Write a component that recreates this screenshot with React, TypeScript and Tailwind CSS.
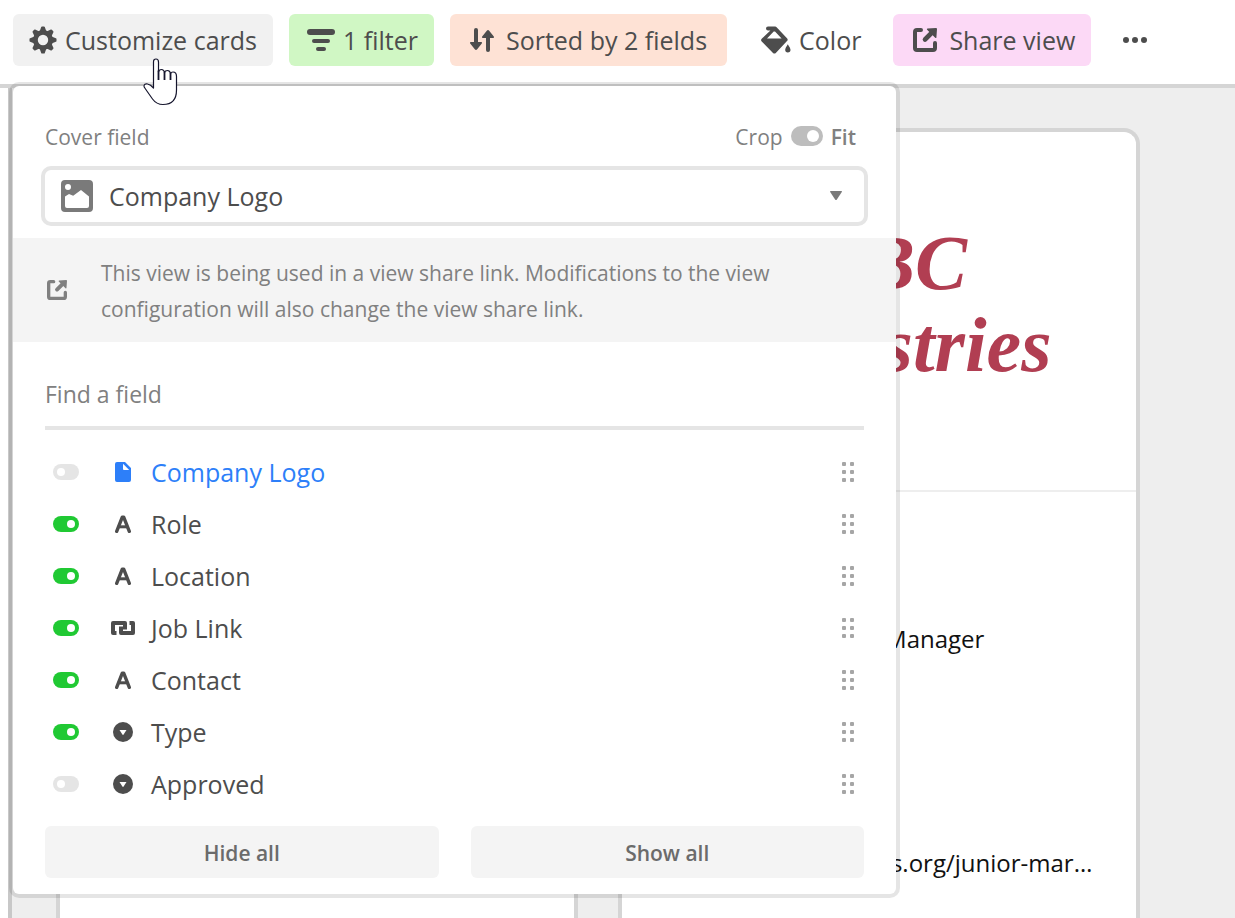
import type { ReactNode } from "react";

type FieldKind = "file" | "text" | "link" | "select";

type Field = {
  name: string;
  kind: FieldKind;
  visible: boolean;
};

const fields: Field[] = [
  { name: "Company Logo", kind: "file", visible: false },
  { name: "Role", kind: "text", visible: true },
  { name: "Location", kind: "text", visible: true },
  { name: "Job Link", kind: "link", visible: true },
  { name: "Contact", kind: "text", visible: true },
  { name: "Type", kind: "select", visible: true },
  { name: "Approved", kind: "select", visible: false },
];

const teeth = [0, 45, 90, 135, 180, 225, 270, 315];

function GearIcon() {
  return (
    <svg width="28" height="28" viewBox="0 0 28 28" fill="none" aria-hidden="true">
      <circle cx="14" cy="14" r="7.6" stroke="currentColor" strokeWidth="4.8" />
      {teeth.map((a) => (
        <path
          key={a}
          d="M10.6 5.5 L12.2 1.1 Q12.4 0.5 13 0.5 H15 Q15.6 0.5 15.8 1.1 L17.4 5.5 Z"
          fill="currentColor"
          transform={`rotate(${a} 14 14)`}
        />
      ))}
    </svg>
  );
}

function FilterIcon() {
  return (
    <svg width="28" height="28" viewBox="0 0 28 28" fill="currentColor" aria-hidden="true">
      <rect x="0" y="3" width="28" height="6" rx="3" />
      <rect x="5" y="13" width="18" height="4" rx="2" />
      <rect x="9" y="21" width="10" height="4" rx="2" />
    </svg>
  );
}

function SortIcon() {
  return (
    <svg width="24" height="24" viewBox="0 0 24 24" fill="currentColor" aria-hidden="true">
      <path d="M4 2a2 2 0 0 1 4 0v12h3.2c.9 0 1.100 .8.6 1.400L7.200 21.300c-.7.8-1.700.8-2.400 0L.2 15.400c-.5-.6-.2-1.400.6-1.400H4z" />
      <path d="M16 22a2 2 0 0 0 4 0V10h3.200c.9 0 1.100-.8.6-1.400L19.200 2.700c-.7-.8-1.700-.8-2.400 0L12.200 8.600c-.5.6-.2 1.400.6 1.400H16z" />
    </svg>
  );
}

function PaintIcon() {
  return (
    <svg width="30" height="28" viewBox="0 0 30 28" aria-hidden="true">
      <path
        fill="currentColor"
        fillRule="evenodd"
        d="M7 0.600h7.200q.8 0 1.400.6L26 12.300q1.400 1.400 0 2.800L14.800 26.900q-1.400 1.400-2.800 0L.7 15.500q-1.300-1.400 0-2.800L9.400 4.500H7A2 2 0 0 1 5 2.600 2 2 0 0 1 7 .6zM12.700 5.500 6 12.400h14.600L14 5.500z"
      />
      <path fill="currentColor" d="M26.800 18.200c1.400 2.400 2.700 4 2.700 5.600a2.600 2.600 0 0 1-5.300 0c0-1.600 1.200-3.200 2.600-5.600z" />
    </svg>
  );
}

function ShareIcon({ size }: { size: number }) {
  return (
    <svg width={size} height={size} viewBox="0 0 24 24" fill="none" aria-hidden="true">
      <path
        d="M8 2H4a2 2 0 0 0-2 2v16a2 2 0 0 0 2 2h16a2 2 0 0 0 2-2v-5"
        stroke="currentColor"
        strokeWidth="4"
        strokeLinecap="round"
      />
      <path d="M12 11.500 18 5.500" stroke="currentColor" strokeWidth="4.600" strokeLinecap="round" />
      <path d="M14.500 0.600 23 0q1 0 1 1l-.6 8.400q-.2 1.200-1.200.4l-8.100-8q-.7-.9.400-1.200z" fill="currentColor" />
    </svg>
  );
}

function ImageIcon() {
  return (
    <svg width="32" height="32" viewBox="0 0 32 32" aria-hidden="true">
      <path
        fill="currentColor"
        fillRule="evenodd"
        d="M4 0h24a4 4 0 0 1 4 4v24a4 4 0 0 1-4 4H4a4 4 0 0 1-4-4V4a4 4 0 0 1 4-4zM7 4a3 3 0 1 0 0 6 3 3 0 0 0 0-6zM4 16.400V26a2 2 0 0 0 2 2h20a2 2 0 0 0 2-2V16.400L20 10l-7.800 5.800L8 14z"
      />
    </svg>
  );
}

function KindIcon({ kind }: { kind: FieldKind }) {
  if (kind === "file") {
    return (
      <svg width="16" height="20" viewBox="0 0 16 20" aria-hidden="true">
        <path
          fill="currentColor"
          fillRule="evenodd"
          d="M2 0h8l6 6v12a2 2 0 0 1-2 2H2a2 2 0 0 1-2-2V2a2 2 0 0 1 2-2zM8 1.800V7a1 1 0 0 0 1 1h5.200z"
        />
      </svg>
    );
  }
  if (kind === "text") {
    return (
      <svg width="16" height="18" viewBox="0 0 16 18" fill="none" stroke="currentColor" aria-hidden="true">
        <path d="M1.700 16.300 7.300 2.200H8.700L14.300 16.300" strokeWidth="3.400" strokeLinecap="round" strokeLinejoin="round" />
        <path d="M4 11.800h8" strokeWidth="3" />
      </svg>
    );
  }
  if (kind === "link") {
    return (
      <svg width="24" height="14" viewBox="0 0 24 14" fill="none" stroke="currentColor" strokeLinejoin="round" aria-hidden="true">
        <path d="M5.500 12H2V2H14V8.500" strokeWidth="4" />
        <path d="M18.500 2H22V12H10V5.500" strokeWidth="4" />
      </svg>
    );
  }
  return (
    <svg width="20" height="20" viewBox="0 0 20 20" aria-hidden="true">
      <circle cx="10" cy="10" r="10" fill="currentColor" />
      <path d="M6.500 8h7L10.600 12.600q-.6.800-1.200 0z" fill="#fff" />
    </svg>
  );
}

function DragHandle() {
  return (
    <svg width="12" height="20" viewBox="0 0 12 20" fill="currentColor" aria-hidden="true">
      {[0, 8, 16].map((y) => (
        <g key={y}>
          <rect x="0" y={y} width="4" height="4" rx="1" />
          <rect x="8" y={y} width="4" height="4" rx="1" />
        </g>
      ))}
    </svg>
  );
}

function HandCursor() {
  return (
    <svg
      className="pointer-events-none absolute left-[142px] top-[58px] z-20"
      width="37"
      height="48"
      viewBox="0 0 37 48"
      aria-hidden="true"
    >
      <path
        d="M11.500 30V4q0-3 2.500-3t2.500 3v10q.5-2.500 3-2.500t3 3q.6-2 3-2t3 3q.5-1.500 2.500-1.500 3.500 0 3.500 4.500V32q0 14.500-13.500 14.500-6.500 0-10.500-5.500L3.500 31Q1.500 28.500 2 27.500q.8-2 3.500-1.500 3 .6 6 4z"
        fill="#fff"
        stroke="#15152d"
        strokeWidth="1.200"
        strokeLinejoin="round"
      />
      <path d="M16.500 12.500V22M22.500 14V22M28.500 15V22" stroke="#15152d" strokeWidth="1.800" fill="none" />
    </svg>
  );
}

function ToolButton({ className, icon, children }: { className: string; icon: ReactNode; children: string }) {
  return (
    <button
      type="button"
      className={`flex h-[52px] shrink-0 items-center whitespace-nowrap rounded-md text-[25px] font-medium ${className}`}
    >
      {icon}
      <span className="pt-0.5">{children}</span>
    </button>
  );
}

function Toolbar() {
  return (
    <header className="flex h-22 items-start gap-4 border-b-4 border-[#d5d5d5] bg-white pl-[13px] pt-3.5 text-[#4d4d4d]">
      <ToolButton className="gap-2 bg-[#f1f1f1] px-4" icon={<GearIcon />}>
        Customize cards
      </ToolButton>
      <ToolButton className="gap-2 bg-[#d0f7c4] pl-[18px] pr-4" icon={<FilterIcon />}>
        1 filter
      </ToolButton>
      <ToolButton className="gap-3 bg-[#fee2d5] px-5" icon={<SortIcon />}>
        Sorted by 2 fields
      </ToolButton>
      <ToolButton className="gap-2 pl-[18px] pr-4" icon={<PaintIcon />}>
        Color
      </ToolButton>
      <ToolButton className="gap-3 bg-[#fcd9f6] pl-5 pr-4" icon={<ShareIcon size={24} />}>
        Share view
      </ToolButton>
      <button type="button" aria-label="More options" className="flex h-[52px] items-center px-4">
        <svg width="24" height="6" viewBox="0 0 24 6" fill="currentColor" aria-hidden="true">
          <circle cx="3" cy="3" r="3" />
          <circle cx="12" cy="3" r="3" />
          <circle cx="21" cy="3" r="3" />
        </svg>
      </button>
    </header>
  );
}

function Board() {
  return (
    <main className="ml-2 grid grow grid-cols-2 gap-10 border-l-4 border-[#c8c8c8] bg-[#eeeeee] pl-11 pr-[95px] pt-10">
      <article className="rounded-t-2xl border-4 border-b-0 border-[#d5d5d5] bg-white" />
      <article className="rounded-t-2xl border-4 border-b-0 border-[#d5d5d5] bg-white">
        <div className="flex h-90 flex-col items-center border-b-2 border-[#eeeeee] pl-5 pt-[90px] font-['Liberation_Serif',serif] text-[78px] font-bold italic leading-[82px] text-[#b13e52]">
          <span>ABC</span>
          <span>Industries</span>
        </div>
        <div className="whitespace-nowrap px-8 pt-[127px] text-2xl text-[#111111]">
          <p className="leading-10">Associate Marketing Manager</p>
          <p className="pt-46 leading-10">
            <a href="#job">http://goabcindustries.org/junior-mar…</a>
          </p>
        </div>
      </article>
    </main>
  );
}

function FieldRow({ field }: { field: Field }) {
  return (
    <li className="flex h-[52px] items-center pl-2 pr-2.5">
      <label className="flex grow items-center">
        <input
          type="checkbox"
          defaultChecked={field.visible}
          className="flex h-4 w-[26px] shrink-0 appearance-none rounded-full bg-[#e5e5e5] p-1 before:size-2 before:rounded-full before:bg-white before:content-[''] checked:bg-[#20c933] checked:before:ml-2.5"
        />
        <span className={`flex items-center ${field.kind === "file" ? "text-[#2d7ff9]" : "text-[#4d4d4d]"}`}>
          <span className="ml-7 flex w-8 justify-center">
            <KindIcon kind={field.kind} />
          </span>
          <span className="ml-3 pt-0.5 text-[25px]">{field.name}</span>
        </span>
      </label>
      <button type="button" aria-label={`Reorder ${field.name}`} className="text-[#a6a6a6]">
        <DragHandle />
      </button>
    </li>
  );
}

function CustomizePanel() {
  return (
    <section
      aria-label="Customize cards"
      className="absolute left-[13px] top-[86px] z-10 w-[883px] rounded-md bg-white pb-4 pt-8 ring-4 ring-black/10"
    >
      <div className="mb-3 flex h-9 items-center justify-between pl-8 pr-10 text-[21px] text-[#808080]">
        <label htmlFor="cover-field" className="pt-1">
          Cover field
        </label>
        <label className="flex items-center gap-2">
          <span className="pt-1">Crop</span>
          <input
            type="checkbox"
            defaultChecked
            className="flex h-5 w-8 appearance-none rounded-full bg-[#bdbdbd] p-1 before:size-3 before:rounded-full before:bg-white before:content-[''] checked:before:ml-3"
          />
          <span className="pt-1 font-semibold">Fit</span>
        </label>
      </div>

      <div className="relative mx-7 mb-3 text-[#7a7a7a]">
        <select
          id="cover-field"
          className="h-15 w-full appearance-none rounded-[10px] border-4 border-[#e5e5e5] bg-white pl-16 pt-0.5 text-[25px] text-[#4d4d4d]"
        >
          <option>Company Logo</option>
        </select>
        <span className="pointer-events-none absolute inset-y-0 left-5 flex items-center">
          <ImageIcon />
        </span>
        <span className="pointer-events-none absolute inset-y-0 right-[26px] flex items-center">
          <svg width="12" height="10" viewBox="0 0 12 10" fill="currentColor" aria-hidden="true">
            <path d="M.6 0h10.800q.9.200.4 1L6.900 8.500q-.9 1-1.800 0L.2 1Q-.2.200.6 0z" />
          </svg>
        </span>
      </div>

      <div className="flex h-26 items-center bg-[#f4f4f4] pl-[34px] pr-10 text-[#808080]">
        <ShareIcon size={20} />
        <p className="ml-[34px] max-w-[700px] pt-0.5 text-[21px] leading-9">
          This view is being used in a view share link. Modifications to the view configuration will also change the view share link.
        </p>
      </div>

      <div className="px-8">
        <input
          type="text"
          placeholder="Find a field"
          aria-label="Find a field"
          className="mt-8 h-14 w-full border-b-4 border-[#e5e5e5] pb-3 text-[23px] text-[#4d4d4d] outline-none placeholder:text-[#808080]"
        />
        <ul className="mt-4">
          {fields.map((field) => (
            <FieldRow key={field.name} field={field} />
          ))}
        </ul>
        <div className="mt-4 grid grid-cols-2 gap-8 text-[21px] font-semibold text-[#6b6b6b]">
          <button type="button" className="h-[52px] rounded-md bg-[#f4f4f4] pt-1">
            Hide all
          </button>
          <button type="button" className="h-[52px] rounded-md bg-[#f4f4f4] pt-1">
            Show all
          </button>
        </div>
      </div>
    </section>
  );
}

export default function App() {
  return (
    <div className="relative flex h-screen flex-col overflow-hidden bg-white font-['Open_Sans','Noto_Sans',sans-serif]">
      <Toolbar />
      <Board />
      <CustomizePanel />
      <HandCursor />
    </div>
  );
}
